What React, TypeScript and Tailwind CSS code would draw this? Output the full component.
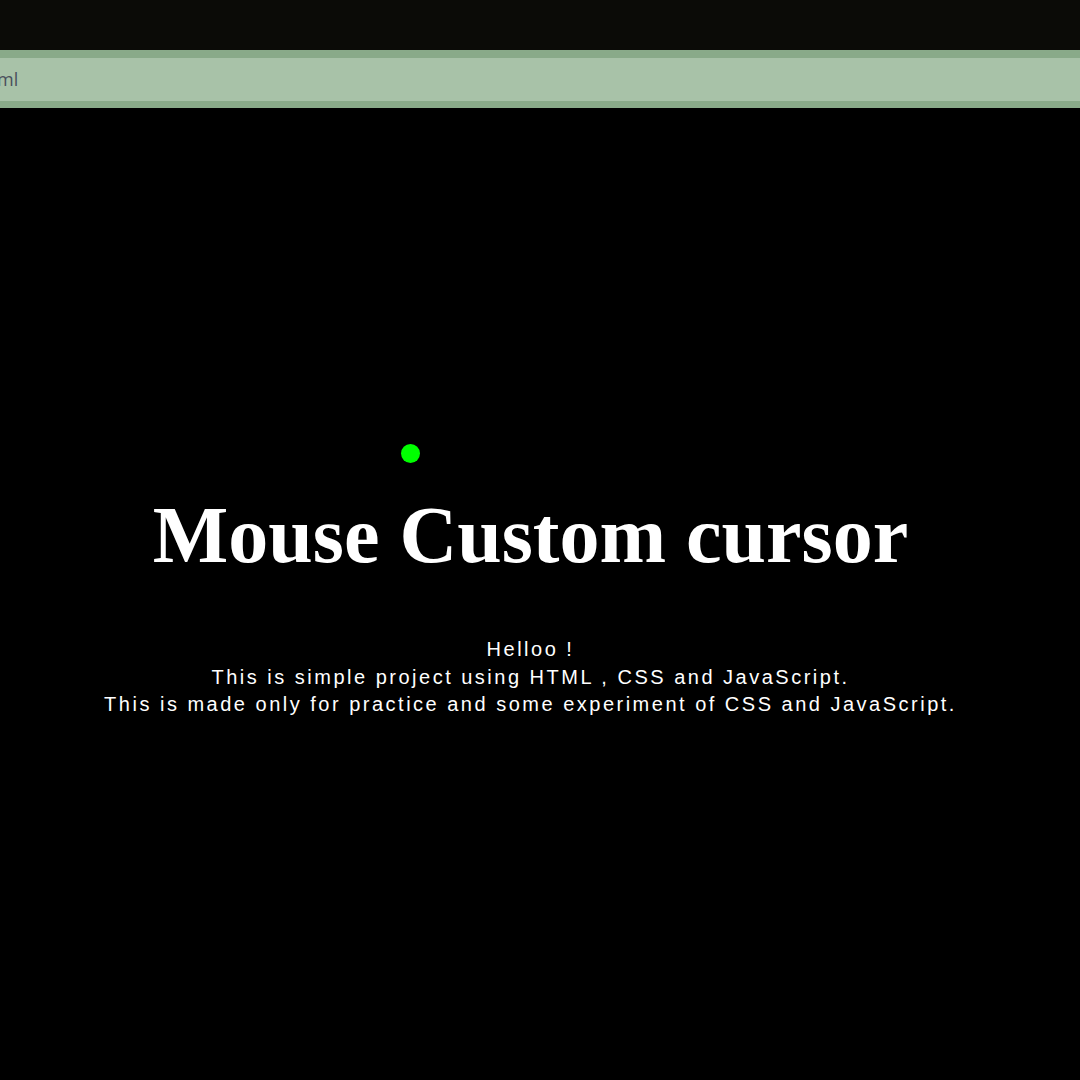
export default function App() {
  return (
    <div className="w-[1080px] h-[1080px] bg-black flex flex-col overflow-hidden">
      <div className="h-[50px] bg-[#0b0b07]" />
      <div className="h-[58px] bg-[#89aa89] py-[8px] pb-[7px]">
        <div className="h-full bg-[#a8c2a8] flex items-center">
          <span className="text-[18px] text-[#4a4f5c] ml-[-3px] font-['Open_Sans',sans-serif]">ml</span>
        </div>
      </div>
      <div className="relative flex-1 flex flex-col items-center pr-[19px]">
        <div className="absolute left-[400.5px] top-[335.5px] w-[19px] h-[19px] rounded-full bg-[#00ff00]" />
        <h1 className="mt-[387px] text-[80px] leading-none font-bold text-white font-['Liberation_Serif',serif]">
          Mouse Custom cursor
        </h1>
        <p className="mt-[61px] text-center text-[20px] leading-[27.5px] tracking-[2.5px] text-white font-['Liberation_Sans',sans-serif]">
          Helloo !
          <br />
          This is simple project using HTML , CSS and JavaScript.
          <br />
          This is made only for practice and some experiment of CSS and JavaScript.
        </p>
      </div>
    </div>
  )
}
